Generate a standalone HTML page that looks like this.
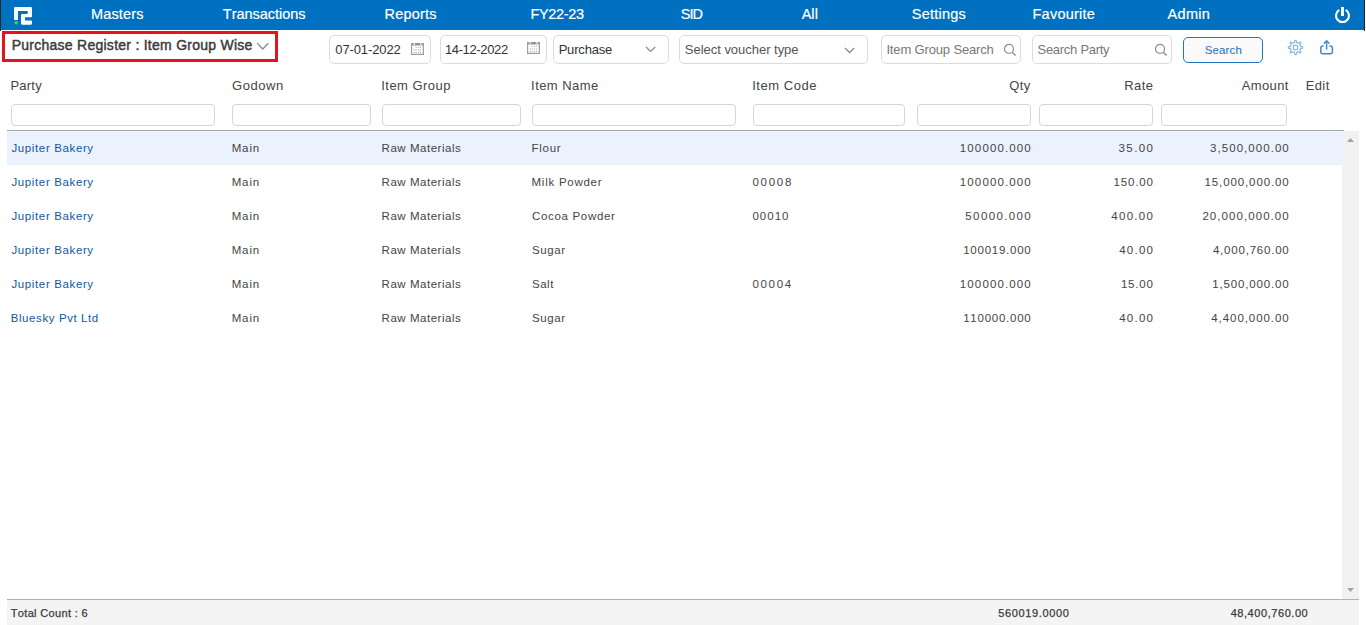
<!DOCTYPE html>
<html><head><meta charset="utf-8"><title>Purchase Register</title>
<style>
html,body{margin:0;padding:0;width:1366px;height:625px;overflow:hidden;background:#fff;position:relative}
body{font-family:"Liberation Sans",sans-serif;font-kerning:none}
.t{position:absolute;white-space:nowrap}
svg{overflow:visible}
</style></head><body>
<div style="position:absolute;left:0px;top:0px;width:1364px;height:30px;box-sizing:border-box;background:#0070c0"></div>
<div style="position:absolute;left:0px;top:0px;width:1px;height:31px;box-sizing:border-box;background:#23272b"></div>
<div style="position:absolute;left:1364px;top:0px;width:1px;height:31px;box-sizing:border-box;background:#1e2226"></div>
<span class="t" style="left:91.01px;top:6.00px;font-size:14.5px;line-height:16px;font-weight:normal;letter-spacing:0.142px;color:#fff;-webkit-text-stroke:0.2px #fff;">Masters</span>
<span class="t" style="left:222.87px;top:6.00px;font-size:14.5px;line-height:16px;font-weight:normal;letter-spacing:-0.032px;color:#fff;-webkit-text-stroke:0.2px #fff;">Transactions</span>
<span class="t" style="left:384.61px;top:6.00px;font-size:14.5px;line-height:16px;font-weight:normal;letter-spacing:0.174px;color:#fff;-webkit-text-stroke:0.2px #fff;">Reports</span>
<span class="t" style="left:530.51px;top:6.00px;font-size:14.5px;line-height:16px;font-weight:normal;letter-spacing:-0.331px;color:#fff;-webkit-text-stroke:0.2px #fff;">FY22-23</span>
<span class="t" style="left:680.84px;top:6.00px;font-size:14.5px;line-height:16px;font-weight:normal;letter-spacing:-1.060px;color:#fff;-webkit-text-stroke:0.2px #fff;">SID</span>
<span class="t" style="left:801.67px;top:6.00px;font-size:14.5px;line-height:16px;font-weight:normal;letter-spacing:0.042px;color:#fff;-webkit-text-stroke:0.2px #fff;">All</span>
<span class="t" style="left:911.84px;top:6.00px;font-size:14.5px;line-height:16px;font-weight:normal;letter-spacing:0.213px;color:#fff;-webkit-text-stroke:0.2px #fff;">Settings</span>
<span class="t" style="left:1032.51px;top:6.00px;font-size:14.5px;line-height:16px;font-weight:normal;letter-spacing:0.236px;color:#fff;-webkit-text-stroke:0.2px #fff;">Favourite</span>
<span class="t" style="left:1167.57px;top:6.00px;font-size:14.5px;line-height:16px;font-weight:normal;letter-spacing:0.293px;color:#fff;-webkit-text-stroke:0.2px #fff;">Admin</span>
<svg style="position:absolute;left:0;top:0" width="40" height="30" viewBox="0 0 40 30">
<path fill="#fff" d="M15.2 7 H30.8 Q32 7 32 8.2 V16.2 Q32 17.3 30.9 17.3 H25 V20.6 H30.9 Q32 20.6 32 21.7 V23.6 Q32 24.7 30.9 24.7 H22.1 Q21 24.7 21 23.6 V15 Q21 13.9 22.1 13.9 H26.6 Q28 13.9 28 12.45 Q28 11 26.6 11 H18 V20 H14 V8.2 Q14 7 15.2 7 Z"/>
<circle cx="16.2" cy="22.8" r="1.8" fill="#3ad83a"/>
</svg>
<svg style="position:absolute;left:0;top:0" width="1366" height="30" viewBox="0 0 1366 30">
<path d="M1339.28 10.01 A6.45 6.45 0 1 0 1345.72 10.01" fill="none" stroke="#fff" stroke-width="2.1"/>
<rect x="1341" y="7" width="3" height="9" fill="#fff"/>
</svg>
<div style="position:absolute;left:2px;top:31px;width:276px;height:31px;box-sizing:border-box;border:3px solid #e3141c"></div>
<span class="t" style="left:11.65px;top:37.00px;font-size:14px;line-height:16px;font-weight:normal;letter-spacing:0.262px;color:#3b3b3b;-webkit-text-stroke:0.45px #3b3b3b;">Purchase Register : Item Group Wise</span>
<svg style="position:absolute;left:256px;top:41px" width="14" height="10" viewBox="0 0 14 10"><path d="M1.3 2.3 L6.8 8 L12.3 2.3" fill="none" stroke="#8a8a8a" stroke-width="1.3"/></svg>
<div style="position:absolute;left:329px;top:35px;width:102px;height:29px;box-sizing:border-box;border:1px solid #dcdcdc;border-radius:5px;background:#fff"></div>
<div style="position:absolute;left:440px;top:35px;width:107px;height:29px;box-sizing:border-box;border:1px solid #dcdcdc;border-radius:5px;background:#fff"></div>
<span class="t" style="left:335.29px;top:42.00px;font-size:13px;line-height:15px;font-weight:normal;letter-spacing:-0.115px;color:#333;">07-01-2022</span>
<span class="t" style="left:444.91px;top:42.00px;font-size:13px;line-height:15px;font-weight:normal;letter-spacing:-0.362px;color:#333;">14-12-2022</span>
<svg style="position:absolute;left:411px;top:42.8px" width="13" height="12" viewBox="0 0 13 12"><rect x="0" y="0" width="13" height="12" fill="#9d9d9d"/><rect x="1.2" y="2.5" width="10.6" height="8.3" fill="#fff"/><rect x="2.6" y="0" width="1.6" height="2" fill="#d8d8d8"/><rect x="9" y="0" width="1.6" height="2" fill="#d8d8d8"/><rect x="4.6" y="0.7" width="3.8" height="1.3" fill="#888"/><rect x="4.60" y="3.80" width="1" height="1.1" fill="#a5a5a5"/><rect x="6.90" y="3.80" width="1" height="1.1" fill="#a5a5a5"/><rect x="8.90" y="3.80" width="1" height="1.1" fill="#a5a5a5"/><rect x="2.70" y="6.40" width="1" height="1.1" fill="#a5a5a5"/><rect x="4.60" y="6.40" width="1" height="1.1" fill="#a5a5a5"/><rect x="6.90" y="6.40" width="1" height="1.1" fill="#a5a5a5"/><rect x="8.90" y="6.40" width="1" height="1.1" fill="#a5a5a5"/><rect x="2.70" y="9.00" width="1" height="1.1" fill="#a5a5a5"/><rect x="4.60" y="9.00" width="1" height="1.1" fill="#a5a5a5"/><rect x="6.90" y="9.00" width="1" height="1.1" fill="#a5a5a5"/><rect x="8.90" y="9.00" width="1" height="1.1" fill="#a5a5a5"/></svg>
<svg style="position:absolute;left:527px;top:42.3px" width="13" height="12" viewBox="0 0 13 12"><rect x="0" y="0" width="13" height="12" fill="#9d9d9d"/><rect x="1.2" y="2.5" width="10.6" height="8.3" fill="#fff"/><rect x="2.6" y="0" width="1.6" height="2" fill="#d8d8d8"/><rect x="9" y="0" width="1.6" height="2" fill="#d8d8d8"/><rect x="4.6" y="0.7" width="3.8" height="1.3" fill="#888"/><rect x="4.60" y="3.80" width="1" height="1.1" fill="#a5a5a5"/><rect x="6.90" y="3.80" width="1" height="1.1" fill="#a5a5a5"/><rect x="8.90" y="3.80" width="1" height="1.1" fill="#a5a5a5"/><rect x="2.70" y="6.40" width="1" height="1.1" fill="#a5a5a5"/><rect x="4.60" y="6.40" width="1" height="1.1" fill="#a5a5a5"/><rect x="6.90" y="6.40" width="1" height="1.1" fill="#a5a5a5"/><rect x="8.90" y="6.40" width="1" height="1.1" fill="#a5a5a5"/><rect x="2.70" y="9.00" width="1" height="1.1" fill="#a5a5a5"/><rect x="4.60" y="9.00" width="1" height="1.1" fill="#a5a5a5"/><rect x="6.90" y="9.00" width="1" height="1.1" fill="#a5a5a5"/><rect x="8.90" y="9.00" width="1" height="1.1" fill="#a5a5a5"/></svg>
<div style="position:absolute;left:553px;top:35px;width:116px;height:29px;box-sizing:border-box;border:1px solid #dcdcdc;border-radius:5px;background:#fff"></div>
<span class="t" style="left:558.63px;top:42.00px;font-size:13px;line-height:15px;font-weight:normal;letter-spacing:-0.182px;color:#333;">Purchase</span>
<svg style="position:absolute;left:645.2px;top:46.1px" width="11.2" height="6.9" viewBox="0 0 11.2 6.9"><path d="M1 1 L5.6 5.4 L10.2 1" fill="none" stroke="#909090" stroke-width="1.4"/></svg>
<div style="position:absolute;left:679px;top:35px;width:189px;height:29px;box-sizing:border-box;border:1px solid #dcdcdc;border-radius:5px;background:#fff"></div>
<span class="t" style="left:684.81px;top:42.00px;font-size:13px;line-height:15px;font-weight:normal;letter-spacing:-0.023px;color:#555;">Select voucher type</span>
<svg style="position:absolute;left:844.3px;top:46.5px" width="11.2" height="7.0" viewBox="0 0 11.2 7.0"><path d="M1 1 L5.6 5.5 L10.2 1" fill="none" stroke="#909090" stroke-width="1.4"/></svg>
<div style="position:absolute;left:881px;top:35px;width:140px;height:29px;box-sizing:border-box;border:1px solid #dcdcdc;border-radius:5px;background:#fff"></div>
<span class="t" style="left:886.40px;top:42.00px;font-size:13px;line-height:15px;font-weight:normal;letter-spacing:-0.149px;color:#777;">Item Group Search</span>
<svg style="position:absolute;left:1003px;top:43px" width="14" height="14" viewBox="0 0 14 14"><circle cx="6" cy="5.9" r="4.5" fill="none" stroke="#8f8f8f" stroke-width="1.2"/><path d="M9.2 9.2 L12.6 12.6" stroke="#8f8f8f" stroke-width="1.4"/></svg>
<div style="position:absolute;left:1032px;top:35px;width:140px;height:29px;box-sizing:border-box;border:1px solid #dcdcdc;border-radius:5px;background:#fff"></div>
<span class="t" style="left:1037.51px;top:42.00px;font-size:13px;line-height:15px;font-weight:normal;letter-spacing:-0.275px;color:#777;">Search Party</span>
<svg style="position:absolute;left:1154px;top:43px" width="14" height="14" viewBox="0 0 14 14"><circle cx="6" cy="5.9" r="4.5" fill="none" stroke="#8f8f8f" stroke-width="1.2"/><path d="M9.2 9.2 L12.6 12.6" stroke="#8f8f8f" stroke-width="1.4"/></svg>
<div style="position:absolute;left:1183px;top:37px;width:80px;height:26px;box-sizing:border-box;border:1.5px solid #1f76c3;border-radius:5px;background:#fafafa"></div>
<span class="t" style="left:1204.78px;top:44.00px;font-size:11.5px;line-height:12px;font-weight:normal;letter-spacing:0.126px;color:#1f6fb8;">Search</span>
<svg style="position:absolute;left:0;top:0" width="1366" height="70" viewBox="0 0 1366 70"><polygon points="1294.41,42.62 1294.85,40.33 1296.15,40.33 1296.59,42.62 1298.18,43.28 1300.11,41.97 1301.03,42.89 1299.72,44.82 1300.38,46.41 1302.67,46.85 1302.67,48.15 1300.38,48.59 1299.72,50.18 1301.03,52.11 1300.11,53.03 1298.18,51.72 1296.59,52.38 1296.15,54.67 1294.85,54.67 1294.41,52.38 1292.82,51.72 1290.89,53.03 1289.97,52.11 1291.28,50.18 1290.62,48.59 1288.33,48.15 1288.33,46.85 1290.62,46.41 1291.28,44.82 1289.97,42.89 1290.89,41.97 1292.82,43.28" fill="none" stroke="#82b6e4" stroke-width="1.1" stroke-linejoin="round"/><circle cx="1295.5" cy="47.5" r="2.4" fill="none" stroke="#82b6e4" stroke-width="1.1"/></svg>
<svg style="position:absolute;left:0;top:0" width="1366" height="70" viewBox="0 0 1366 70">
<path d="M1323.6 45.9 H1322.8 Q1320.8 45.9 1320.8 47.9 V51.8 Q1320.8 53.8 1322.8 53.8 H1330.4 Q1332.4 53.8 1332.4 51.8 V47.9 Q1332.4 45.9 1330.4 45.9 H1329.4" fill="none" stroke="#3d8bd6" stroke-width="1.5"/>
<path d="M1326.6 49.6 V41.2" stroke="#3d8bd6" stroke-width="1.5"/><path d="M1324.2 43.3 L1326.6 40.9 L1329 43.3" fill="none" stroke="#3d8bd6" stroke-width="1.5" stroke-linecap="round"/>
</svg>
<span class="t" style="left:10.43px;top:78.00px;font-size:13px;line-height:15px;font-weight:normal;letter-spacing:0.238px;color:#444;">Party</span>
<span class="t" style="left:231.95px;top:78.00px;font-size:13px;line-height:15px;font-weight:normal;letter-spacing:0.596px;color:#444;">Godown</span>
<span class="t" style="left:381.30px;top:78.00px;font-size:13px;line-height:15px;font-weight:normal;letter-spacing:0.458px;color:#444;">Item Group</span>
<span class="t" style="left:531.10px;top:78.00px;font-size:13px;line-height:15px;font-weight:normal;letter-spacing:0.438px;color:#444;">Item Name</span>
<span class="t" style="left:752.20px;top:78.00px;font-size:13px;line-height:15px;font-weight:normal;letter-spacing:0.526px;color:#444;">Item Code</span>
<span class="t" style="left:1009.28px;top:78.00px;font-size:13px;line-height:15px;font-weight:normal;letter-spacing:0.409px;color:#444;">Qty</span>
<span class="t" style="left:1124.13px;top:78.00px;font-size:13px;line-height:15px;font-weight:normal;letter-spacing:0.495px;color:#444;">Rate</span>
<span class="t" style="left:1241.87px;top:78.00px;font-size:13px;line-height:15px;font-weight:normal;letter-spacing:0.344px;color:#444;">Amount</span>
<span class="t" style="left:1305.63px;top:78.00px;font-size:13px;line-height:15px;font-weight:normal;letter-spacing:0.420px;color:#444;">Edit</span>
<div style="position:absolute;left:11px;top:104px;width:204px;height:22px;box-sizing:border-box;border:1px solid #d6d6d6;border-radius:4px;background:#fff"></div>
<div style="position:absolute;left:232px;top:104px;width:139px;height:22px;box-sizing:border-box;border:1px solid #d6d6d6;border-radius:4px;background:#fff"></div>
<div style="position:absolute;left:382px;top:104px;width:139px;height:22px;box-sizing:border-box;border:1px solid #d6d6d6;border-radius:4px;background:#fff"></div>
<div style="position:absolute;left:532px;top:104px;width:204px;height:22px;box-sizing:border-box;border:1px solid #d6d6d6;border-radius:4px;background:#fff"></div>
<div style="position:absolute;left:753px;top:104px;width:152px;height:22px;box-sizing:border-box;border:1px solid #d6d6d6;border-radius:4px;background:#fff"></div>
<div style="position:absolute;left:917px;top:104px;width:114px;height:22px;box-sizing:border-box;border:1px solid #d6d6d6;border-radius:4px;background:#fff"></div>
<div style="position:absolute;left:1039px;top:104px;width:114px;height:22px;box-sizing:border-box;border:1px solid #d6d6d6;border-radius:4px;background:#fff"></div>
<div style="position:absolute;left:1161px;top:104px;width:126px;height:22px;box-sizing:border-box;border:1px solid #d6d6d6;border-radius:4px;background:#fff"></div>
<div style="position:absolute;left:7px;top:130px;width:1337px;height:1px;box-sizing:border-box;background:#a9a9a9"></div>
<div style="position:absolute;left:7px;top:131px;width:1335px;height:34px;box-sizing:border-box;background:#ebf2fd"></div>
<div style="position:absolute;left:1342px;top:131px;width:17px;height:468px;box-sizing:border-box;background:#f1f1f1"></div>
<svg style="position:absolute;left:1342px;top:131px" width="17" height="468" viewBox="0 0 17 468"><path d="M5 11 L8.5 7 L12 11 Z" fill="#a3a3a3"/><path d="M5 457 L12 457 L8.5 461 Z" fill="#a3a3a3"/></svg>
<span class="t" style="left:11.42px;top:142.00px;font-size:11.5px;line-height:12px;font-weight:normal;letter-spacing:0.631px;color:#12589c;">Jupiter Bakery</span>
<span class="t" style="left:231.66px;top:142.00px;font-size:11.5px;line-height:12px;font-weight:normal;letter-spacing:0.888px;color:#444;">Main</span>
<span class="t" style="left:381.56px;top:142.00px;font-size:11.5px;line-height:12px;font-weight:normal;letter-spacing:0.534px;color:#444;">Raw Materials</span>
<span class="t" style="left:531.56px;top:142.00px;font-size:11.5px;line-height:12px;font-weight:normal;letter-spacing:0.708px;color:#444;">Flour</span>
<span class="t" style="left:959.82px;top:142.00px;font-size:11.5px;line-height:12px;font-weight:normal;letter-spacing:1.130px;color:#444;">100000.000</span>
<span class="t" style="left:1118.56px;top:142.00px;font-size:11.5px;line-height:12px;font-weight:normal;letter-spacing:1.402px;color:#444;">35.00</span>
<span class="t" style="left:1210.06px;top:142.00px;font-size:11.5px;line-height:12px;font-weight:normal;letter-spacing:1.049px;color:#444;">3,500,000.00</span>
<span class="t" style="left:11.42px;top:176.00px;font-size:11.5px;line-height:12px;font-weight:normal;letter-spacing:0.631px;color:#12589c;">Jupiter Bakery</span>
<span class="t" style="left:231.66px;top:176.00px;font-size:11.5px;line-height:12px;font-weight:normal;letter-spacing:0.888px;color:#444;">Main</span>
<span class="t" style="left:381.56px;top:176.00px;font-size:11.5px;line-height:12px;font-weight:normal;letter-spacing:0.534px;color:#444;">Raw Materials</span>
<span class="t" style="left:531.56px;top:176.00px;font-size:11.5px;line-height:12px;font-weight:normal;letter-spacing:0.741px;color:#444;">Milk Powder</span>
<span class="t" style="left:752.45px;top:176.00px;font-size:11.5px;line-height:12px;font-weight:normal;letter-spacing:1.718px;color:#444;">00008</span>
<span class="t" style="left:959.82px;top:176.00px;font-size:11.5px;line-height:12px;font-weight:normal;letter-spacing:1.130px;color:#444;">100000.000</span>
<span class="t" style="left:1113.42px;top:176.00px;font-size:11.5px;line-height:12px;font-weight:normal;letter-spacing:0.870px;color:#444;">150.00</span>
<span class="t" style="left:1204.52px;top:176.00px;font-size:11.5px;line-height:12px;font-weight:normal;letter-spacing:0.890px;color:#444;">15,000,000.00</span>
<span class="t" style="left:11.42px;top:210.00px;font-size:11.5px;line-height:12px;font-weight:normal;letter-spacing:0.631px;color:#12589c;">Jupiter Bakery</span>
<span class="t" style="left:231.66px;top:210.00px;font-size:11.5px;line-height:12px;font-weight:normal;letter-spacing:0.888px;color:#444;">Main</span>
<span class="t" style="left:381.56px;top:210.00px;font-size:11.5px;line-height:12px;font-weight:normal;letter-spacing:0.534px;color:#444;">Raw Materials</span>
<span class="t" style="left:531.92px;top:210.00px;font-size:11.5px;line-height:12px;font-weight:normal;letter-spacing:0.686px;color:#444;">Cocoa Powder</span>
<span class="t" style="left:752.45px;top:210.00px;font-size:11.5px;line-height:12px;font-weight:normal;letter-spacing:1.005px;color:#444;">00010</span>
<span class="t" style="left:965.34px;top:210.00px;font-size:11.5px;line-height:12px;font-weight:normal;letter-spacing:1.381px;color:#444;">50000.000</span>
<span class="t" style="left:1111.24px;top:210.00px;font-size:11.5px;line-height:12px;font-weight:normal;letter-spacing:1.308px;color:#444;">400.00</span>
<span class="t" style="left:1202.42px;top:210.00px;font-size:11.5px;line-height:12px;font-weight:normal;letter-spacing:1.065px;color:#444;">20,000,000.00</span>
<span class="t" style="left:11.42px;top:244.00px;font-size:11.5px;line-height:12px;font-weight:normal;letter-spacing:0.631px;color:#12589c;">Jupiter Bakery</span>
<span class="t" style="left:231.66px;top:244.00px;font-size:11.5px;line-height:12px;font-weight:normal;letter-spacing:0.888px;color:#444;">Main</span>
<span class="t" style="left:381.56px;top:244.00px;font-size:11.5px;line-height:12px;font-weight:normal;letter-spacing:0.534px;color:#444;">Raw Materials</span>
<span class="t" style="left:531.98px;top:244.00px;font-size:11.5px;line-height:12px;font-weight:normal;letter-spacing:0.581px;color:#444;">Sugar</span>
<span class="t" style="left:963.22px;top:244.00px;font-size:11.5px;line-height:12px;font-weight:normal;letter-spacing:0.752px;color:#444;">100019.000</span>
<span class="t" style="left:1119.14px;top:244.00px;font-size:11.5px;line-height:12px;font-weight:normal;letter-spacing:1.259px;color:#444;">40.00</span>
<span class="t" style="left:1212.94px;top:244.00px;font-size:11.5px;line-height:12px;font-weight:normal;letter-spacing:0.788px;color:#444;">4,000,760.00</span>
<span class="t" style="left:11.42px;top:278.00px;font-size:11.5px;line-height:12px;font-weight:normal;letter-spacing:0.631px;color:#12589c;">Jupiter Bakery</span>
<span class="t" style="left:231.66px;top:278.00px;font-size:11.5px;line-height:12px;font-weight:normal;letter-spacing:0.888px;color:#444;">Main</span>
<span class="t" style="left:381.56px;top:278.00px;font-size:11.5px;line-height:12px;font-weight:normal;letter-spacing:0.534px;color:#444;">Raw Materials</span>
<span class="t" style="left:531.98px;top:278.00px;font-size:11.5px;line-height:12px;font-weight:normal;letter-spacing:0.530px;color:#444;">Salt</span>
<span class="t" style="left:752.45px;top:278.00px;font-size:11.5px;line-height:12px;font-weight:normal;letter-spacing:1.677px;color:#444;">00004</span>
<span class="t" style="left:959.82px;top:278.00px;font-size:11.5px;line-height:12px;font-weight:normal;letter-spacing:1.130px;color:#444;">100000.000</span>
<span class="t" style="left:1120.92px;top:278.00px;font-size:11.5px;line-height:12px;font-weight:normal;letter-spacing:0.812px;color:#444;">15.00</span>
<span class="t" style="left:1212.32px;top:278.00px;font-size:11.5px;line-height:12px;font-weight:normal;letter-spacing:0.843px;color:#444;">1,500,000.00</span>
<span class="t" style="left:10.66px;top:312.00px;font-size:11.5px;line-height:12px;font-weight:normal;letter-spacing:0.595px;color:#12589c;">Bluesky Pvt Ltd</span>
<span class="t" style="left:231.66px;top:312.00px;font-size:11.5px;line-height:12px;font-weight:normal;letter-spacing:0.888px;color:#444;">Main</span>
<span class="t" style="left:381.56px;top:312.00px;font-size:11.5px;line-height:12px;font-weight:normal;letter-spacing:0.534px;color:#444;">Raw Materials</span>
<span class="t" style="left:531.98px;top:312.00px;font-size:11.5px;line-height:12px;font-weight:normal;letter-spacing:0.581px;color:#444;">Sugar</span>
<span class="t" style="left:963.22px;top:312.00px;font-size:11.5px;line-height:12px;font-weight:normal;letter-spacing:0.752px;color:#444;">110000.000</span>
<span class="t" style="left:1119.14px;top:312.00px;font-size:11.5px;line-height:12px;font-weight:normal;letter-spacing:1.259px;color:#444;">40.00</span>
<span class="t" style="left:1211.24px;top:312.00px;font-size:11.5px;line-height:12px;font-weight:normal;letter-spacing:0.942px;color:#444;">4,400,000.00</span>
<div style="position:absolute;left:7px;top:599px;width:1352px;height:1px;box-sizing:border-box;background:#b0b0b0"></div>
<div style="position:absolute;left:7px;top:600px;width:1352px;height:25px;box-sizing:border-box;background:#f4f4f4"></div>
<span class="t" style="left:10.75px;top:607.00px;font-size:11px;line-height:12px;font-weight:normal;letter-spacing:0.334px;color:#3a3a3a;-webkit-text-stroke:0.25px #3a3a3a;">Total Count : 6</span>
<span class="t" style="left:998.26px;top:607.00px;font-size:11px;line-height:12px;font-weight:normal;letter-spacing:0.634px;color:#3a3a3a;-webkit-text-stroke:0.25px #3a3a3a;">560019.0000</span>
<span class="t" style="left:1230.65px;top:607.00px;font-size:11px;line-height:12px;font-weight:normal;letter-spacing:0.561px;color:#3a3a3a;-webkit-text-stroke:0.25px #3a3a3a;">48,400,760.00</span>
</body></html>
